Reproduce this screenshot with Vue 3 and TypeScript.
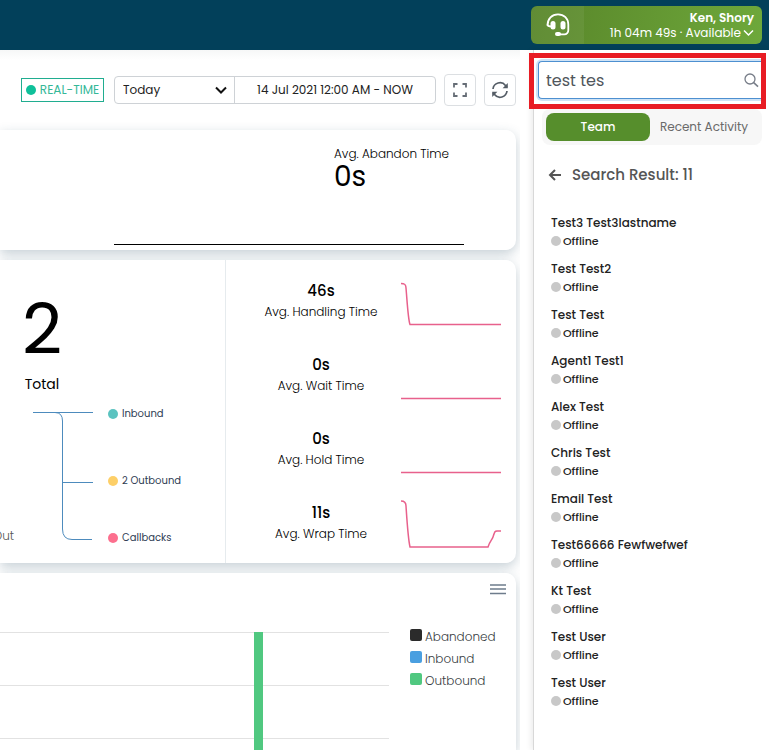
<script setup lang="ts">
import { ref } from 'vue'

interface Agent { id: number; name: string; status: string }
interface Stat { value: string; label: string; path: string }
interface Series { label: string; color: string }

const range = ref('Today')
const query = ref('test tes')
const activeTab = ref('Team')
const tabs = ['Team', 'Recent Activity']

const names = [
  'Test3 Test3lastname', 'Test Test2', 'Test Test', 'Agent1 Test1', 'Alex Test', 'Chris Test',
  'Email Test', 'Test66666 Fewfwefwef', 'Kt Test', 'Test User', 'Test User',
]
const agents: Agent[] = names.map((name, id) => ({ id, name, status: 'Offline' }))

const stats: Stat[] = [
  { value: '46s', label: 'Avg. Handling Time', path: 'M0 -0.500C3 -0.500 5 0 5 4 C6 15 7 35 9 40.500 H100' },
  { value: '0s', label: 'Avg. Wait Time', path: 'M0 40.500 H100' },
  { value: '0s', label: 'Avg. Hold Time', path: 'M0 40.500 H100' },
  { value: '11s', label: 'Avg. Wrap Time', path: 'M0 -5 C3 -5 5 -4 5 0 C6 15 7 32 9 41 H87 C89 35 91 34 92 31 C94 25 94 25 96 25 H100' },
]

const directions: Series[] = [
  { label: 'Inbound', color: '#5bc3c0' },
  { label: '2 Outbound', color: '#fdcf68' },
  { label: 'Callbacks', color: '#fc6f8e' },
]

const legend: Series[] = [
  { label: 'Abandoned', color: '#2b2b2b' },
  { label: 'Inbound', color: '#4a9fe0' },
  { label: 'Outbound', color: '#50c880' },
]
</script>

<template>
  <div class="page">
    <header class="topbar">
      <button class="agent" type="button">
        <span class="agent-icon">
          <svg width="24" height="24" viewBox="0 0 24 24" fill="none" stroke="#fff">
            <path d="M1.500 12.500C1.500 5.500 6 1.300 12 1.300S22.300 5.500 22.300 11.500V17a4 4 0 0 1-4 4.300H14" stroke-width="1.800" />
            <rect x="4.500" y="8" width="5" height="8.500" rx="2.500" fill="#fff" stroke="none" />
            <rect x="14.500" y="8" width="5" height="8.500" rx="2.500" fill="#fff" stroke="none" />
            <path d="M1.500 11.500q0 2 4 2" stroke-width="1.800" />
            <rect x="9" y="19" width="6" height="4" rx="2" fill="#fff" stroke="none" />
          </svg>
        </span>
        <span class="agent-text">
          <strong>Ken, Shory</strong>
          <span class="agent-state">1h 04m 49s · Available
            <svg width="11" height="8" viewBox="0 0 11 8" fill="none" stroke="#fff" stroke-width="1.500"><path d="M1 1.500l4.500 4.500L10 1.500" /></svg>
          </span>
        </span>
      </button>
    </header>

    <div class="body">
      <main class="main">
        <div class="toolbar">
          <span class="realtime"><i class="live-dot"></i>REAL-TIME</span>
          <div class="period">
            <label class="range">
              <select v-model="range" aria-label="Period">
                <option>Today</option>
                <option>Yesterday</option>
              </select>
              <svg class="chevron" width="12" height="8" viewBox="0 0 12 8" fill="none" stroke="#111" stroke-width="2"><path d="M1 1.500l5 5 5-5" /></svg>
            </label>
            <button class="dates" type="button">14 Jul 2021 12:00 AM - NOW</button>
          </div>
          <div class="tools">
            <button class="tool" type="button" aria-label="Full screen">
              <svg width="16" height="16" viewBox="0 0 16 16" fill="none" stroke="#666d76" stroke-width="1.800"><path d="M2 5.500v-3.500h3.500M10.500 2h3.500v3.500M14 10.500v3.500h-3.500M5.500 14h-3.500v-3.500" /></svg>
            </button>
            <button class="tool" type="button" aria-label="Refresh">
              <svg width="18" height="18" viewBox="0 0 18 18" fill="none" stroke="#555d66" stroke-width="1.700"><path d="M2 8a7 7 0 0 1 12.500-3.500L16 6M16 10a7 7 0 0 1-12.500 3.500L2 12" /><path d="M16.800 2v5.200h-5.200zM1.200 16v-5.200h5.200z" fill="#555d66" stroke="none" /></svg>
            </button>
          </div>
        </div>

        <div class="cards">
          <section class="card abandon">
            <div class="abandon-text">
              <span class="label">Avg. Abandon Time</span>
              <span class="abandon-value">0s</span>
            </div>
            <div class="baseline"></div>
          </section>

          <section class="card overview">
            <div class="totals">
              <div class="total">
                <span class="total-value">2</span>
                <span class="total-label">Total</span>
              </div>
              <div class="tree">
                <span class="out">Out</span>
                <svg width="60" height="130" viewBox="0 0 60 130" fill="none" stroke="#4d8bbd">
                  <path d="M0 1.500H60M22 1.500Q29.500 1.500 29.500 10V118Q29.500 128.500 39 128.500H59M29.500 71.500H60" />
                </svg>
                <ul class="directions">
                  <li v-for="d in directions" :key="d.label"><i class="dot" :style="{ background: d.color }"></i>{{ d.label }}</li>
                </ul>
              </div>
            </div>
            <div class="stats">
              <div v-for="s in stats" :key="s.label" class="stat">
                <div class="stat-text">
                  <strong>{{ s.value }}</strong>
                  <span class="label">{{ s.label }}</span>
                </div>
                <svg class="spark" width="100" height="42" viewBox="0 0 100 42" fill="none" stroke="#e8618c" stroke-width="1.500"><path :d="s.path" /></svg>
              </div>
            </div>
          </section>

          <section class="card volume">
            <button class="menu" type="button" aria-label="Chart menu">
              <svg width="16" height="12" viewBox="0 0 16 12" stroke="#6e7c8c" stroke-width="1.700"><path d="M0 2h16M0 6h16M0 10.500h16" /></svg>
            </button>
            <div class="chart-row">
              <div class="plot"><div class="bar"></div></div>
              <ul class="legend">
                <li v-for="l in legend" :key="l.label"><i :style="{ background: l.color }"></i>{{ l.label }}</li>
              </ul>
            </div>
          </section>
        </div>
      </main>

      <aside class="sidebar">
        <div class="search">
          <input v-model="query" type="text" aria-label="Search agents">
          <svg class="magnifier" width="15" height="15" viewBox="0 0 15 15" fill="none" stroke="#777d88" stroke-width="1.300"><circle cx="6" cy="6" r="5" /><path d="M9.700 9.700l4.300 4" stroke-width="1.600" /></svg>
          <div class="highlight"></div>
        </div>
        <div class="tabs">
          <button v-for="t in tabs" :key="t" type="button" :class="{ active: t === activeTab }" @click="activeTab = t">{{ t }}</button>
        </div>
        <div class="result">
          <button type="button" aria-label="Back">
            <svg width="14" height="12" viewBox="0 0 14 12" fill="none" stroke="#555" stroke-width="2"><path d="M13 6H2M7 1L2 6l5 5" /></svg>
          </button>
          <h2>Search Result: 11</h2>
        </div>
        <ul class="agents">
          <li v-for="a in agents" :key="a.id">
            <span class="name">{{ a.name }}</span>
            <span class="status"><i class="dot"></i>{{ a.status }}</span>
          </li>
        </ul>
      </aside>
    </div>
  </div>
</template>

<style>
body { background: #fff; }
</style>

<style scoped>
* { box-sizing: border-box; }
.page {
  height: 100vh;
  display: flex;
  flex-direction: column;
  overflow: hidden;
  font-family: Poppins, Inter, sans-serif;
  font-size: 12px;
  line-height: 18px;
  color: #222;
}
button, input, select { font: inherit; color: inherit; margin: 0; }
button { padding: 0; border: 0; background: none; display: flex; align-items: center; justify-content: center; }
ul { margin: 0; padding: 0; list-style: none; }
svg { display: block; flex: none; }

.topbar {
  flex: none;
  height: 50px;
  padding: 6px 7px;
  display: flex;
  justify-content: flex-end;
  background: #02405a;
}
.agent {
  width: 231px;
  align-items: stretch;
  border-radius: 6px;
  overflow: hidden;
  color: #fff;
  background: linear-gradient(100deg, #588529, #6ea83b);
}
.agent-icon { width: 53px; display: flex; align-items: center; justify-content: center; background: rgba(255, 255, 255, 0.06); }
.agent-text { flex: 1; padding: 4px 8px 3px 0; display: flex; flex-direction: column; text-align: right; line-height: 15px; }
.agent-text strong { font-weight: 600; }
.agent-state { display: flex; align-items: center; justify-content: flex-end; gap: 2px; white-space: nowrap; }

.body { flex: 1; min-height: 0; display: grid; grid-template-columns: minmax(0, 1fr) 236px; }
.main {
  overflow: hidden;
  margin-right: 13px;
  padding-right: 4px;
  display: flex;
  flex-direction: column;
  background: linear-gradient(#f6f7f7, #fff 10px);
}
.toolbar { flex: none; height: 80px; display: flex; align-items: center; justify-content: flex-end; gap: 8px; }
.realtime {
  width: 83px;
  height: 24px;
  margin-right: 2px;
  display: flex;
  align-items: center;
  justify-content: center;
  gap: 4px;
  border: 1px solid #20ad90;
  color: #35b898;
  white-space: nowrap;
}
.live-dot { width: 10px; height: 10px; border-radius: 50%; background: #0fc09a; }
.period { display: flex; height: 28px; width: 322px; border: 1px solid #ced2d6; border-radius: 4px; }
.range { position: relative; width: 120px; border-right: 1px solid #ced2d6; }
.range select { width: 100%; height: 100%; padding: 0 8px; border: 0; background: none; appearance: none; }
.chevron { position: absolute; right: 7px; top: 9px; pointer-events: none; }
.dates { flex: 1; white-space: nowrap; }
.tools { display: flex; gap: 8px; }
.tool { width: 32px; height: 32px; border: 1px solid #dcdfe2; border-radius: 4px; }

.cards { flex: 1; min-height: 0; display: flex; flex-direction: column; gap: 10px; }
.card { background: #fff; border-radius: 0 10px 10px 0; box-shadow: 0 4px 12px rgba(35, 75, 95, 0.26); }
.label { font-weight: 300; color: #000; }

.abandon { flex: none; height: 120px; display: flex; flex-direction: column; justify-content: space-between; padding: 15px 52px 5px 114px; }
.abandon-text { align-self: flex-end; width: 130px; display: flex; flex-direction: column; }
.abandon-value { font-size: 28px; line-height: 28px; color: #000; }
.baseline { height: 1px; background: #000; }

.overview { flex: none; display: grid; grid-template-columns: minmax(0, 1fr) 291px; }
.totals { padding-top: 28px; }
.total { width: 84px; display: flex; flex-direction: column; align-items: center; color: #000; }
.total-value { font-size: 70px; line-height: 84px; }
.total-label { font-size: 14px; line-height: 24px; }
.tree { display: flex; padding-top: 15px; }
.out { width: 33px; padding-right: 19px; display: flex; justify-content: flex-end; align-items: flex-end; height: 134px; color: #555; font-weight: 300; }
.directions { margin-top: -2px; padding-left: 15px; display: grid; grid-template-rows: 67px 57px 10px; font-size: 10px; line-height: 10px; color: #2d3b52; }
.directions li { display: flex; align-items: flex-start; gap: 4px; white-space: nowrap; }
.dot { flex: none; width: 10px; height: 10px; border-radius: 50%; background: #c8c8c8; }
.stats { display: grid; gap: 28px; padding: 20px 15px 15px; border-left: 1px solid #e6ebee; }
.stat { display: grid; grid-template-columns: 1fr 100px; height: 46px; }
.stat-text { display: flex; flex-direction: column; align-items: center; }
.stat-text strong { font-size: 15px; line-height: 22px; font-weight: 500; color: #000; }
.stat-text .label { line-height: 20px; }
.spark { align-self: end; overflow: visible; }

.volume { flex: 1; min-height: 0; border-radius: 0 10px 0 0; display: flex; flex-direction: column; padding-right: 10px; }
.menu { align-self: flex-end; height: 32px; }
.chart-row { flex: 1; display: grid; grid-template-columns: minmax(0, 1fr) 96px; gap: 21px; padding-top: 24px; }
.plot { padding: 3px 0 0 254px; background: repeating-linear-gradient(#e2e2e2 0 1px, transparent 1px 53px) 0 3px no-repeat; }
.bar { width: 9px; height: 100%; background: #50c880; }
.legend { font-size: 12px; line-height: 16px; color: #373d3f; font-weight: 300; }
.legend li { display: flex; align-items: flex-start; gap: 3px; height: 22px; }
.legend i { width: 12px; height: 12px; border-radius: 2px; }

.sidebar { padding: 11px 7px 0 4px; border-left: 1px solid #d8d8d8; box-shadow: -2px 0 6px rgba(0, 0, 0, 0.08); background: #fff; }
.search { position: relative; height: 38px; margin-right: -2px; }
.search input {
  width: 100%;
  height: 100%;
  padding: 0 30px 0 7px;
  border: 1px solid #4d90d0;
  border-right: 0;
  border-radius: 4px 0 0 4px;
  outline: 0;
  box-shadow: 0 0 0 2px #cfe3f6;
  font-size: 16px;
  color: #50565c;
  background: #fff;
}
.magnifier { position: absolute; right: 5px; top: 12px; }
.highlight { position: absolute; inset: -8px -2px -10px -9px; border: 5px solid #e81c24; pointer-events: none; }
.tabs { margin: 10px 0 0 4px; padding: 4px; display: grid; grid-template-columns: 104px 1fr; border-radius: 8px; background: #f7f7f7; }
.tabs button { height: 28px; border-radius: 8px; white-space: nowrap; color: #6a6a6a; }
.tabs .active { background: #568e2c; color: #fff; font-weight: 500; }
.result { display: flex; align-items: center; gap: 10px; padding: 18px 10px 0; }
.result h2 { margin: 0; font-size: 15px; line-height: 24px; font-weight: 500; color: #555; }
.agents { display: grid; gap: 10px; padding: 27px 13px 0; font-weight: 500; }
.agents li { display: flex; flex-direction: column; height: 36px; }
.name { line-height: 18px; }
.status { display: flex; align-items: center; gap: 2px; font-size: 11px; line-height: 18px; }
</style>
